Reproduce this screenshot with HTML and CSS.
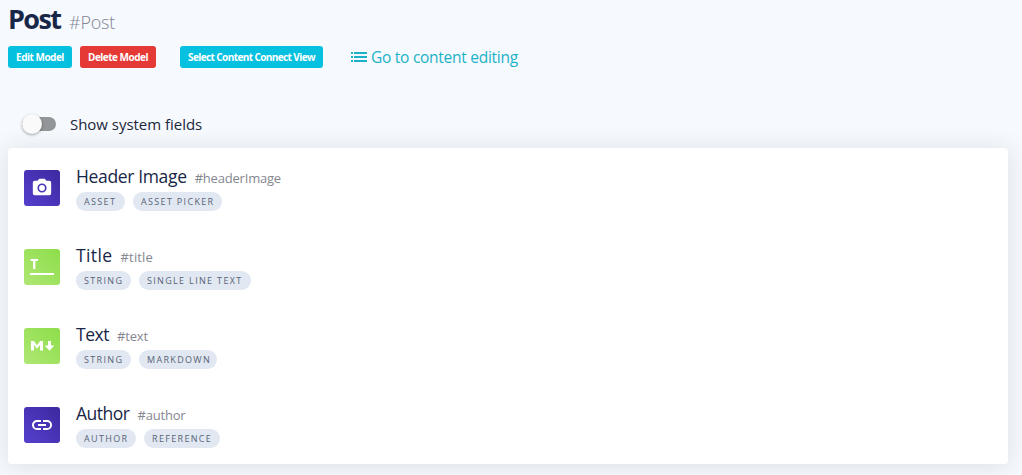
FILE: index.html
```html
<!DOCTYPE html>
<html lang="en">
<head>
<meta charset="utf-8">
<title>Post</title>
<link rel="stylesheet" href="styles.css">
</head>
<body>
<header class="heading"><h1 class="title">Post</h1><span class="model-id">#Post</span></header>
<nav class="actions">
  <button class="btn edit">Edit Model</button>
  <button class="btn delete">Delete Model</button>
  <button class="btn view">Select Content Connect View</button>
  <a class="link"><svg width="16" height="10" viewBox="0 0 16 10" fill="currentColor"><path d="M0 0h2v2H0zM3 0h13v2H3zM0 4h2v2H0zM3 4h13v2H3zM0 8h2v2H0zM3 8h13v2H3z"/></svg><span class="link-text">Go to content editing</span></a>
</nav>
<label class="toggle"><span class="track"><span class="thumb"></span></span><span class="toggle-text">Show system fields</span></label>
<main class="card">
  <section class="field">
    <span class="icon purple"><svg width="22" height="22" viewBox="0 0 24 24" fill="#fff"><circle cx="12" cy="12" r="3.2"/><path fill-rule="evenodd" d="M9 2 7.170 4H4a2 2 0 0 0-2 2v12a2 2 0 0 0 2 2h16a2 2 0 0 0 2-2V6a2 2 0 0 0-2-2h-3.170L15 2H9zm3 15a5 5 0 1 1 0-10 5 5 0 0 1 0 10z"/></svg></span>
    <div class="info">
      <div class="names"><span class="name n1">Header Image</span><span class="id i1">#headerImage</span></div>
      <div class="chips"><span class="chip w49">ASSET</span><span class="chip w89">ASSET PICKER</span></div>
    </div>
  </section>
  <section class="field">
    <span class="icon green"><svg width="36" height="36" viewBox="0 0 36 36" fill="none" stroke="#fff" stroke-width="2"><path d="M6.500 11H14M6 25h24"/><path stroke-width="2.400" d="M10.200 11v9"/></svg></span>
    <div class="info">
      <div class="names"><span class="name n2">Title</span><span class="id i2">#title</span></div>
      <div class="chips"><span class="chip w55">STRING</span><span class="chip w112">SINGLE LINE TEXT</span></div>
    </div>
  </section>
  <section class="field">
    <span class="icon green"><svg width="36" height="36" viewBox="0 0 36 36" fill="#fff"><path d="M7 22.500V13h2.800l3.200 4.200 3.200-4.200H19v9.500h-3v-5.500l-3 3.800-3-3.800v5.500zM24 13h3v4.500h3.300l-4.800 5.200-4.800-5.200H24z"/></svg></span>
    <div class="info">
      <div class="names"><span class="name n3">Text</span><span class="id i3">#text</span></div>
      <div class="chips"><span class="chip w55">STRING</span><span class="chip w78">MARKDOWN</span></div>
    </div>
  </section>
  <section class="field">
    <span class="icon purple"><svg width="24" height="24" viewBox="0 0 24 24" fill="#fff"><path d="M3.900 12c0-1.710 1.390-3.100 3.100-3.100h4V7H7a5 5 0 0 0 0 10h4v-1.900H7A3.100 3.100 0 0 1 3.900 12zM8 13h8v-2H8v2zm9-6h-4v1.900h4a3.100 3.100 0 0 1 0 6.200h-4V17h4a5 5 0 0 0 0-10z"/></svg></span>
    <div class="info">
      <div class="names"><span class="name n4">Author</span><span class="id i4">#author</span></div>
      <div class="chips"><span class="chip w60">AUTHOR</span><span class="chip w76">REFERENCE</span></div>
    </div>
  </section>
</main>
</body>
</html>
```
FILE: styles.css
```css
* { box-sizing: border-box; }
body { margin: 0; padding: 0 14px 0 8px; height: 475px; overflow: hidden; background: #f6f9fd; color: #182747; font-family: "Open Sans", "Noto Sans", sans-serif; }
.heading { height: 46px; display: flex; align-items: baseline; line-height: 40px; white-space: nowrap; }
.title { margin: 0; width: 61px; font-size: 27px; line-height: 38px; font-weight: 700; letter-spacing: -1.600px; }
.model-id { font-size: 18px; font-weight: 300; color: #818494; letter-spacing: -.2px; }
.actions { display: flex; height: 22px; align-items: center; white-space: nowrap; }
.btn { height: 22px; padding: 0; border: 0; border-radius: 3px; background: #05c1df; color: #fff; font: 700 10px "Open Sans", sans-serif; letter-spacing: -.5px; }
.edit { width: 64px; margin-right: 8px; }
.delete { width: 76px; margin-right: 24px; background: #e53935; }
.view { width: 143px; margin-right: 28px; letter-spacing: -.6px; }
.link { display: flex; align-items: center; gap: 4px; color: #1bb2c8; font-size: 15.500px; letter-spacing: -.27px; line-height: 20px; }
.toggle { display: flex; align-items: center; height: 24px; margin: 44px 0 12px 14px; font-size: 15px; letter-spacing: -.03px; color: #20273a; }
.track { width: 34px; height: 14px; border-radius: 7px; background: #939698; margin-right: 14px; display: flex; align-items: center; }
.thumb { width: 20px; height: 20px; flex: none; border-radius: 50%; background: #fafafa; box-shadow: 0 1px 3px rgba(0,0,0,.35); }
.card { height: 316px; background: #fff; border-radius: 4px; box-shadow: 0 2px 24px rgba(40,50,80,.13); }
.field { display: flex; height: 79px; padding: 22px 16px 0; }
.icon { width: 36px; height: 36px; border-radius: 3px; display: flex; align-items: center; justify-content: center; margin-right: 16px; }
.icon svg { flex: none; }
.purple { background: linear-gradient(45deg, #5540cf, #3d289f); }
.green { background: linear-gradient(45deg, #afe775, #8ddd49); }
.info { margin-top: -6px; }
.names { display: flex; align-items: baseline; height: 28px; line-height: 25px; white-space: nowrap; }
.name { font-size: 17.500px; margin-right: 8px; }
.n1 { letter-spacing: -.35px; }
.n2 { letter-spacing: .4px; }
.n3 { letter-spacing: -.45px; }
.n4 { letter-spacing: -.5px; }
.id { font-size: 13px; letter-spacing: -.2px; color: #85878f; }
.i2 { letter-spacing: .15px; }
.chips { display: flex; gap: 8px; }
.chip { height: 19px; border-radius: 10px; background: #e1e8f2; color: #596376; font-size: 9px; line-height: 19px; letter-spacing: 1.330px; padding-left: 8px; white-space: nowrap; }
.w49 { width: 49px; } .w89 { width: 89px; } .w55 { width: 55px; } .w112 { width: 112px; }
.w78 { width: 78px; } .w60 { width: 60px; } .w76 { width: 76px; }
```
